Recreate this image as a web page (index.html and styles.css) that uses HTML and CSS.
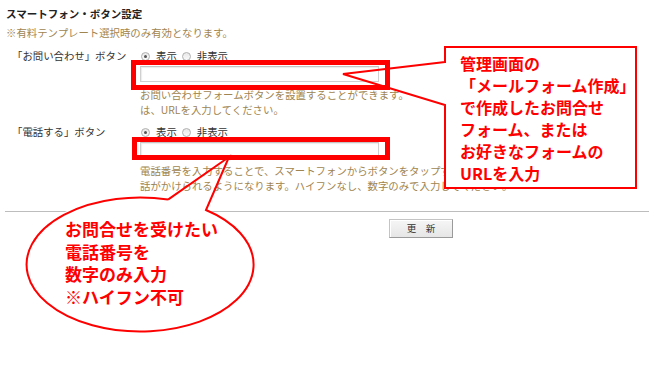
FILE: index.html
```html
<!DOCTYPE html>
<html lang="ja">
<head>
<meta charset="utf-8">
<title>スマートフォン・ボタン設定</title>
<link rel="stylesheet" href="styles.css">
</head>
<body>
<div class="page">
  <h1 class="title">スマートフォン・ボタン設定</h1>
  <p class="note">※有料テンプレート選択時のみ有効となります。</p>
  <div class="form">
    <div class="row">
      <div class="label">「お問い合わせ」ボタン</div>
      <div class="field">
        <div class="radios"><span class="radio checked"></span><span class="rlabel">表示</span><span class="radio"></span><span class="rlabel">非表示</span></div>
        <div class="input"></div>
        <p class="help">お問い合わせフォームボタンを設置することができます。<br>は、URLを入力してください。</p>
      </div>
    </div>
    <div class="row row2">
      <div class="label">「電話する」ボタン</div>
      <div class="field">
        <div class="radios"><span class="radio checked"></span><span class="rlabel">表示</span><span class="radio"></span><span class="rlabel">非表示</span></div>
        <div class="input"></div>
        <p class="help">電話番号を入力することで、スマートフォンからボタンをタップすると電<br>話がかけられるようになります。ハイフンなし、数字のみで入力してください。</p>
      </div>
    </div>
  </div>
  <div class="divider"></div>
  <div class="actions"><button class="btn" type="button">更　新</button></div>
</div>

<svg class="overlay" width="655" height="388" viewBox="0 0 655 388">
  <rect x="445" y="47" width="191" height="141" fill="#fff"/>
  <path d="M445,62 L343,74 L445,105 L445,188 L636,188 L636,47 L445,47 Z" fill="none" stroke="#f00" stroke-width="2" stroke-linejoin="miter"/>
  <ellipse cx="136.5" cy="264" rx="113.5" ry="67" fill="#fff"/>
  <path d="M168,199.6 L229,157 L206,210 A113.5,67 0 1,1 168,199.6" fill="none" stroke="#f00" stroke-width="2"/>
</svg>

<div class="mark mark1"></div>
<div class="mark mark2"></div>

<div class="callout-text note-right">
  <div>管理画面の</div>
  <div>「メールフォーム作成」</div>
  <div>で作成したお問合せ</div>
  <div>フォーム、または</div>
  <div>お好きなフォームの</div>
  <div>URLを入力</div>
</div>
<div class="callout-text note-left">
  <div>お問合せを受けたい</div>
  <div>電話番号を</div>
  <div>数字のみ入力</div>
  <div>※ハイフン不可</div>
</div>
</body>
</html>
```

FILE: styles.css
```css
html, body {
  margin: 0;
  padding: 0;
  background: #fff;
}
body {
  width: 655px;
  height: 388px;
  overflow: hidden;
  position: relative;
  font-family: "Noto Sans CJK JP", "Noto Sans", sans-serif;
  font-size: 10.4px;
  color: #333;
}
.page {
  padding: 0 6px 0 6px;
}
.title {
  margin: 0;
  padding-top: 6px;
  font-size: 10.5px;
  line-height: 15px;
  font-weight: bold;
  color: #222;
}
.note {
  margin: 4px 0 0 0;
  line-height: 15px;
  color: #a08550;
}
.form {
  margin-top: 9px;
  padding-left: 6px;
}
.row {
  display: grid;
  grid-template-columns: 128px 1fr;
}
.row2 {
  margin-top: 8px;
}
.label {
  line-height: 14px;
  color: #333;
}
.field {
  display: flex;
  flex-direction: column;
}
.radios {
  display: flex;
  align-items: center;
  height: 14px;
  line-height: 14px;
}
.radio {
  width: 9px;
  height: 9px;
  box-sizing: border-box;
  border: 1px solid #b0b0b0;
  border-radius: 50%;
  background: linear-gradient(#e8e8e8, #fafafa);
  margin-left: 1px;
  margin-right: 6px;
  position: relative;
}
.radio.checked::after {
  content: "";
  position: absolute;
  left: 2px;
  top: 2px;
  width: 3px;
  height: 3px;
  border-radius: 50%;
  background: #555;
}
.rlabel {
  margin-right: 4px;
}
.input {
  margin-top: 3px;
  width: 239px;
  height: 16px;
  box-sizing: border-box;
  border: 1px solid #d0d0d0;
  border-top-color: #c4c4c4;
  background: #fff;
  box-shadow: inset 1px 1px 1px #ececec;
}
.help {
  margin: 6px 0 0 0;
  line-height: 14.5px;
  color: #a08550;
  white-space: nowrap;
}
.divider {
  margin: 18px 0 0 -1px;
  border-top: 1px solid #bdbdbd;
  width: 644px;
}
.actions {
  display: flex;
  margin-top: 7px;
  padding-left: 383px;
}
.btn {
  width: 64px;
  height: 19px;
  padding: 0;
  font-family: "Noto Sans CJK JP", sans-serif;
  font-size: 9.5px;
  line-height: 17px;
  color: #333;
  background: linear-gradient(#f6f6f6, #e6e6e6);
  border: 1px solid #c4c4c4;
  border-right-color: #9a9a9a;
  border-bottom-color: #9a9a9a;
  box-shadow: inset 1px 1px 0 #fff;
}
.overlay {
  position: absolute;
  left: 0;
  top: 0;
  pointer-events: none;
}
.mark {
  position: absolute;
  box-sizing: border-box;
  border: 5px solid #f00;
}
.mark1 {
  left: 131px;
  top: 60px;
  width: 259px;
  height: 30px;
}
.mark2 {
  left: 132px;
  top: 137px;
  width: 258px;
  height: 23px;
}
.callout-text {
  position: absolute;
  font-family: "Noto Sans CJK JP", sans-serif;
  font-weight: bold;
  color: #f00;
  white-space: nowrap;
}
.note-right {
  left: 460px;
  top: 52px;
  font-size: 16px;
  line-height: 22px;
}
.note-left {
  left: 65px;
  top: 218px;
  font-size: 17px;
  line-height: 22.5px;
}
```
